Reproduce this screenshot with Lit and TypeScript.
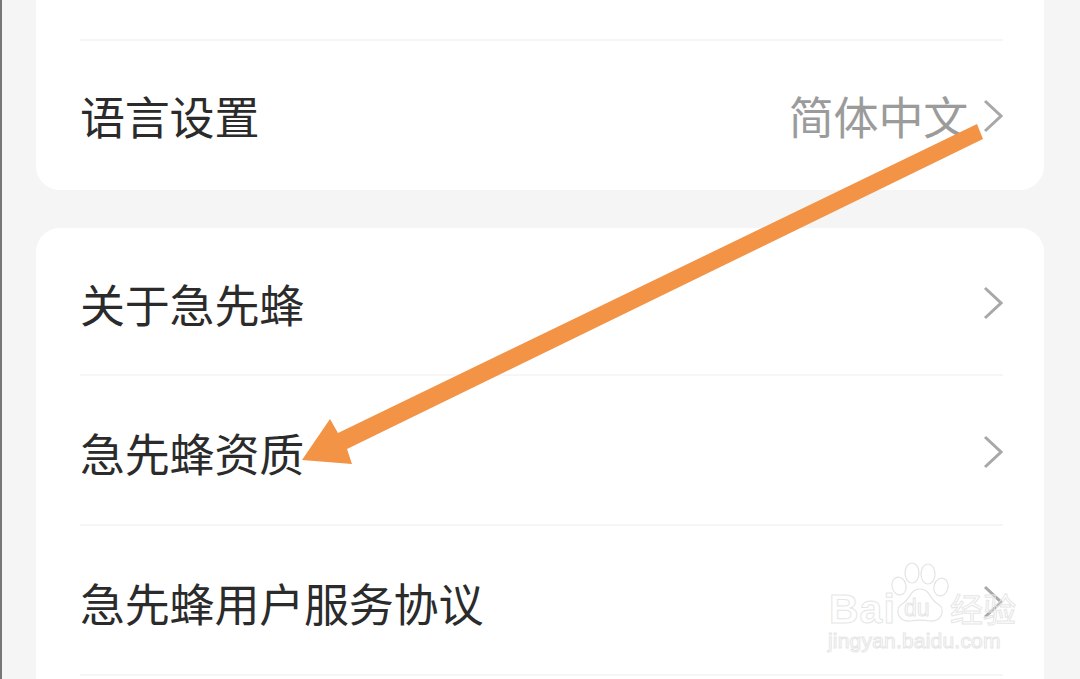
import { LitElement, html, css, svg } from "lit";
import { customElement } from "lit/decorators.js";

const chevron = html`<svg class="chev" width="22" height="36" viewBox="0 0 22 36" aria-hidden="true"><path d="M4 3 L20 18 L4 33" fill="none" stroke="#a8a8a8" stroke-width="3"/></svg>`;

@customElement("app-root")
export class AppRoot extends LitElement {
  static styles = css`
    :host {
      display: block;
      position: relative;
      width: 1080px;
      height: 679px;
      overflow: hidden;
      background: #f5f5f5;
      font-family: "Noto Sans CJK SC", "Noto Sans", sans-serif;
      color: #2b2b2b;
    }
    .page {
      height: 679px;
      box-sizing: border-box;
      padding: 0 36px 0 34px;
      border-left: 2px solid #77777a;
      display: flex;
      flex-direction: column;
      gap: 38px;
    }
    .card {
      background: #fff;
      padding: 0 41px 0 44px;
    }
    .card.one {
      border-radius: 0 0 24px 24px;
      height: 190px;
      box-sizing: border-box;
      flex: none;
    }
    .card.two {
      border-radius: 24px 24px 0 0;
      flex: 1;
    }
    .spacer {
      height: 39px;
      border-bottom: 2px solid #f6f6f6;
    }
    .row {
      display: flex;
      align-items: center;
      justify-content: space-between;
      height: 149px;
      font-size: 45px;
      line-height: 1;
      border-bottom: 2px solid #f6f6f6;
      letter-spacing: -0.2px;
    }
    .row.plain { border-bottom: none; }
    .card.two .row { padding-top: 4px; }
    .card.two .row.first { height: 142px; }
    .card.two .row.narrow { height: 144px; }
    .val {
      display: flex;
      align-items: center;
      gap: 13px;
      color: #9b9b9b;
      font-size: 45px;
    }
    .chev { flex: none; display: block; }
    .arrow {
      position: absolute;
      left: 0;
      top: 0;
      pointer-events: none;
    }
    .mark {
      position: absolute;
      left: 828px;
      top: 562px;
      width: 200px;
      height: 100px;
      color: transparent;
      -webkit-text-stroke: 1px #e6e6e6;
      font-family: "Liberation Sans", sans-serif;
      pointer-events: none;
    }
    .paw { position: absolute; left: 62px; top: 0; }
    .b1, .b2, .zh, .url { position: absolute; white-space: nowrap; line-height: 1; }
    .b1 { left: 1px; top: 27px; font-size: 41px; font-weight: 700; letter-spacing: 1px; }
    .b2 { left: 76px; top: 35px; font-size: 23px; }
    .zh { left: 122px; top: 30px; font-size: 33px; font-family: "Noto Sans CJK SC", sans-serif; }
    .url { left: 0; top: 68px; font-size: 21px; letter-spacing: 0.2px; }
  `;

  render() {
    return html`
      <div class="page">
        <section class="card one">
          <div class="spacer"></div>
          <div class="row plain">
            <span>语言设置</span>
            <span class="val">简体中文${chevron}</span>
          </div>
        </section>
        <section class="card two">
          <div class="row first"><span>关于急先蜂</span>${chevron}</div>
          <div class="row narrow"><span>急先蜂资质</span>${chevron}</div>
          <div class="row narrow"><span>急先蜂用户服务协议</span>${chevron}</div>
        </section>
      </div>
      <div class="mark">
        <svg class="paw" width="60" height="62" viewBox="0 0 60 62" fill="#fff" stroke="#e4e4e4" stroke-width="1.2" aria-hidden="true">
          <ellipse cx="9" cy="24" rx="7" ry="9" transform="rotate(-15 9 24)"/>
          <ellipse cx="22" cy="11" rx="7" ry="10"/>
          <ellipse cx="38" cy="12" rx="7" ry="10"/>
          <ellipse cx="51" cy="25" rx="7" ry="9" transform="rotate(15 51 25)"/>
          <path d="M30 27 C20 27 20 38 12 42 C4 47 8 60 20 59 C26 58 34 58 40 59 C52 60 56 47 48 42 C40 38 40 27 30 27 Z"/>
        </svg>
        <span class="b1">Bai</span>
        <span class="b2">du</span>
        <span class="zh">经验</span>
        <span class="url">jingyan.baidu.com</span>
      </div>
      <svg class="arrow" width="1080" height="679" viewBox="0 0 1080 679" aria-hidden="true">
        ${svg`<path d="M977 124 L983 139 L347 449 L352 464 L302 460 L330 419 L338 433 Z" fill="#f29346"/>`}
      </svg>
    `;
  }
}
